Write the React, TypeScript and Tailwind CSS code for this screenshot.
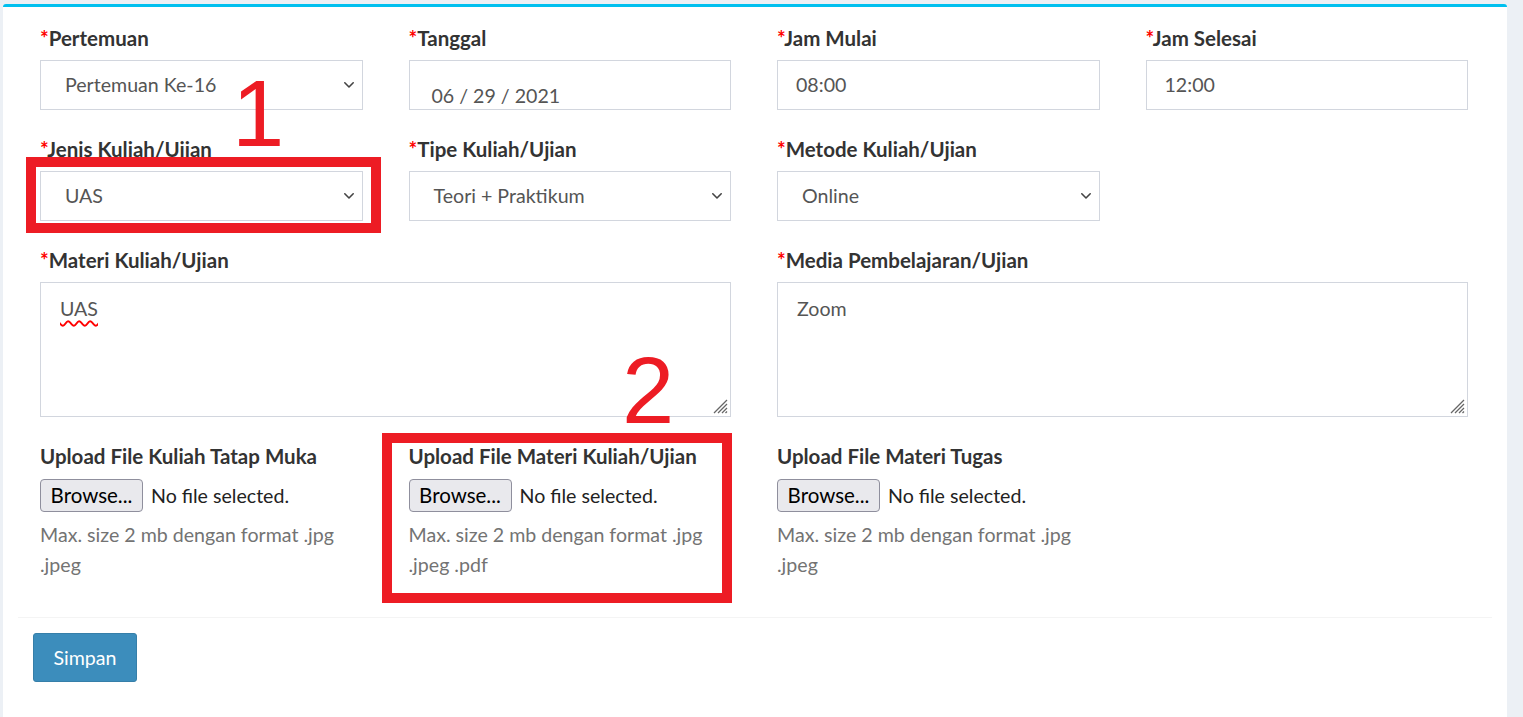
import React from 'react';

/* ─── Small pieces ─── */

function Label({ text, required }: { text: string; required?: boolean }) {
  return (
    <div className="h-[25px] leading-[25px] text-[20.5px] font-bold text-[#333] whitespace-nowrap">
      {required && <span className="text-[#ff0000]">*</span>}
      {text}
    </div>
  );
}

function Chevron() {
  return (
    <svg width="12" height="8" viewBox="0 0 12 8" className="shrink-0">
      <path d="M1.8 1.8 L6 6 L10.2 1.8" fill="none" stroke="#444" strokeWidth="1.6" strokeLinecap="round" strokeLinejoin="round" />
    </svg>
  );
}

function SelectBox({ value }: { value: string }) {
  return (
    <div className="h-[50px] border border-[#d2d6de] bg-white flex items-center justify-between pl-[24px] pr-[7px] text-[19.6px] text-[#555]">
      <span>{value}</span>
      <Chevron />
    </div>
  );
}

function TextBox({ value, className = '' }: { value: string; className?: string }) {
  return (
    <div className={`h-[50px] border border-[#d2d6de] bg-white flex items-center text-[19.6px] text-[#555] ${className}`}>
      {value}
    </div>
  );
}

function TextArea({ value, misspelled }: { value: string; misspelled?: boolean }) {
  return (
    <div className="relative h-[135px] border border-[#d2d6de] bg-white pl-[19px] pt-[12px] text-[19.6px] text-[#555] leading-[27px]">
      <span className={misspelled ? 'underline decoration-wavy decoration-[#ff0000] decoration-[1.5px] underline-offset-[4px]' : ''}>
        {value}
      </span>
      {/* resize grip */}
      <svg width="16" height="16" viewBox="0 0 16 16" className="absolute right-[2px] bottom-[2px]">
        <path d="M15 2 L2 15 M15 6 L6 15 M15 10 L10 15 M15 13.5 L13.5 15" stroke="#666" strokeWidth="1.3" />
      </svg>
    </div>
  );
}

function UploadField({ label, formats }: { label: string; formats: string }) {
  return (
    <div>
      <div className="h-[25px] leading-[25px] text-[20.5px] font-bold text-[#333] whitespace-nowrap mb-[10px]">{label}</div>
      <div className="flex items-center h-[33px]">
        <div className="h-[33px] w-[103px] rounded-[4px] border border-[#8f8f9d] bg-[#e9e9ed] flex items-center justify-center text-[20.5px] text-black">
          Browse...
        </div>
        <span className="ml-[8px] text-[19.6px] text-[#222]">No file selected.</span>
      </div>
      <div className="mt-[8px] text-[19.6px] leading-[30px] text-[#737373]">
        Max. size 2 mb dengan format .jpg
        <br />
        {formats}
      </div>
    </div>
  );
}

/* ─── Page ─── */

export default function App() {
  return (
    <div className="min-h-screen bg-[#ecf0f5] pl-[3px] pr-[16px] pt-[4px]" style={{ fontFamily: 'Lato, "Noto Sans", sans-serif' }}>
      <div className="relative bg-white border-t-[3px] border-[#00c0ef] rounded-t-[3px] min-h-[713px]">
        {/* form body */}
        <div className="grid grid-cols-4 gap-x-[46px] gap-y-[27px] pl-[37px] pr-[39px] pt-[19px] pb-[37px]">
          <div>
            <div className="mb-[9px]"><Label required text="Pertemuan" /></div>
            <SelectBox value="Pertemuan Ke-16" />
          </div>
          <div>
            <div className="mb-[9px]"><Label required text="Tanggal" /></div>
            <div className="h-[50px] border border-[#d2d6de] bg-white flex items-end pl-[22px] text-[19.6px] leading-[26px] text-[#555]">
              06 / 29 / 2021
            </div>
          </div>
          <div>
            <div className="mb-[9px]"><Label required text="Jam Mulai" /></div>
            <TextBox value="08:00" className="pl-[18px]" />
          </div>
          <div>
            <div className="mb-[9px]"><Label required text="Jam Selesai" /></div>
            <TextBox value="12:00" className="pl-[18px]" />
          </div>

          <div>
            <div className="mb-[9px]"><Label required text="Jenis Kuliah/Ujian" /></div>
            <SelectBox value="UAS" />
          </div>
          <div>
            <div className="mb-[9px]"><Label required text="Tipe Kuliah/Ujian" /></div>
            <SelectBox value="Teori + Praktikum" />
          </div>
          <div>
            <div className="mb-[9px]"><Label required text="Metode Kuliah/Ujian" /></div>
            <SelectBox value="Online" />
          </div>
          <div />

          <div className="col-span-2">
            <div className="mb-[9px]"><Label required text="Materi Kuliah/Ujian" /></div>
            <TextArea value="UAS" misspelled />
          </div>
          <div className="col-span-2">
            <div className="mb-[9px]"><Label required text="Media Pembelajaran/Ujian" /></div>
            <TextArea value="Zoom" />
          </div>

          <UploadField label="Upload File Kuliah Tatap Muka" formats=".jpeg" />
          <UploadField label="Upload File Materi Kuliah/Ujian" formats=".jpeg .pdf" />
          <UploadField label="Upload File Materi Tugas" formats=".jpeg" />
          <div />
        </div>

        {/* footer */}
        <div className="mx-[15px] border-t border-[#f4f4f4] px-[15px] pt-[15px]">
          <button className="h-[49px] w-[104px] rounded-[3px] border border-[#367fa9] bg-[#3c8dbc] text-white text-[19.6px]">
            Simpan
          </button>
        </div>

        {/* annotations drawn over the form */}
        <div className="absolute left-[23px] top-[150px] w-[355px] h-[76px] border-[10px] border-[#ed1c24]" />
        <div className="absolute left-[379px] top-[426px] w-[350px] h-[170px] border-[10px] border-[#ed1c24]" />
        <div
          className="absolute left-[229px] top-[60px] text-[94px] leading-none text-[#ed1c24]"
          style={{ fontFamily: '"Liberation Sans", sans-serif' }}
        >
          1
        </div>
        <div
          className="absolute left-[619px] top-[337px] text-[94px] leading-none text-[#ed1c24]"
          style={{ fontFamily: '"Liberation Sans", sans-serif' }}
        >
          2
        </div>
      </div>
    </div>
  );
}
